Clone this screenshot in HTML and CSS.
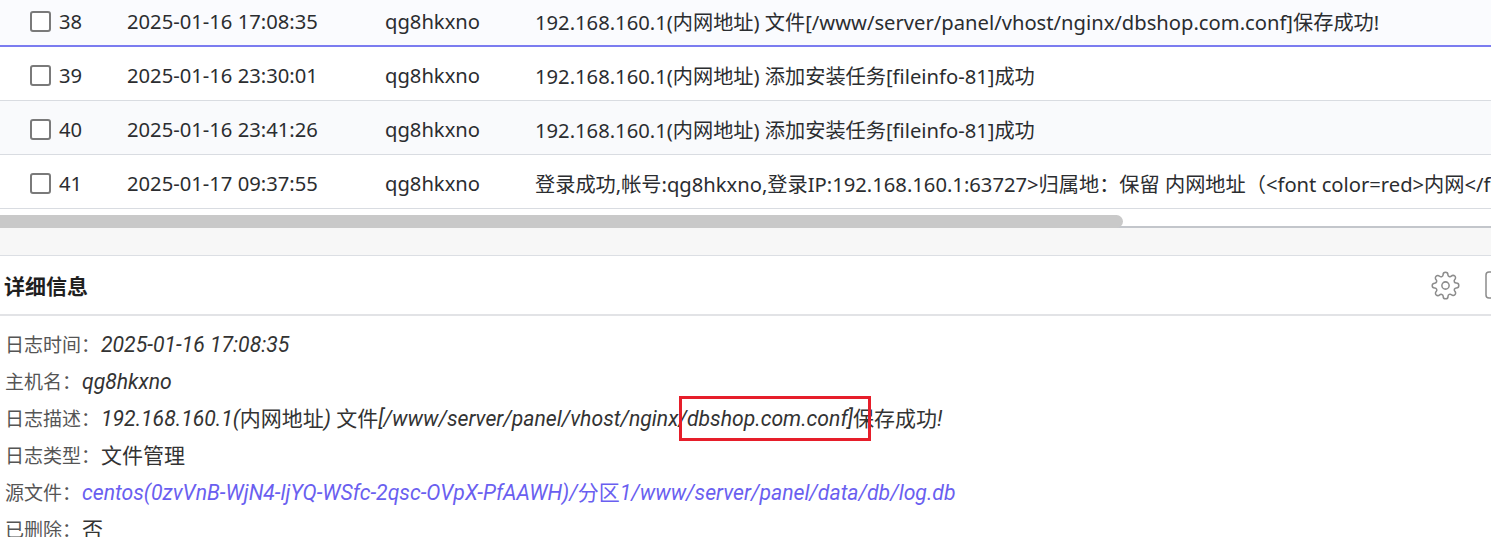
FILE: index.html
```html
<!DOCTYPE html>
<html lang="zh-CN">
<head>
<meta charset="utf-8">
<title>日志详情</title>
<link rel="stylesheet" href="styles.css">
</head>
<body>
<div class="grid">
  <div class="row row-first">
    <div class="c-idx"><span class="cb"></span><span>38</span></div>
    <div class="c-time">2025-01-16 17:08:35</div>
    <div class="c-host">qg8hkxno</div>
    <div class="c-desc">192.168.160.1(内网地址) 文件[/www/server/panel/vhost/nginx/dbshop.com.conf]保存成功!</div>
  </div>
  <div class="row">
    <div class="c-idx"><span class="cb"></span><span>39</span></div>
    <div class="c-time">2025-01-16 23:30:01</div>
    <div class="c-host">qg8hkxno</div>
    <div class="c-desc">192.168.160.1(内网地址) 添加安装任务[fileinfo-81]成功</div>
  </div>
  <div class="row row-alt">
    <div class="c-idx"><span class="cb"></span><span>40</span></div>
    <div class="c-time">2025-01-16 23:41:26</div>
    <div class="c-host">qg8hkxno</div>
    <div class="c-desc">192.168.160.1(内网地址) 添加安装任务[fileinfo-81]成功</div>
  </div>
  <div class="row">
    <div class="c-idx"><span class="cb"></span><span>41</span></div>
    <div class="c-time">2025-01-17 09:37:55</div>
    <div class="c-host">qg8hkxno</div>
    <div class="c-desc">登录成功,帐号:qg8hkxno,登录IP:192.168.160.1:63727&gt;归属地：保留 内网地址（&lt;font color=red&gt;内网&lt;/font&gt;）</div>
  </div>
</div>
<div class="hscroll"><div class="hscroll-thumb"></div></div>
<div class="band"></div>
<section class="detail">
  <div class="detail-head">
    <h2 class="detail-title">详细信息</h2>
    <div class="tools">
      <svg class="gear" width="29" height="29" viewBox="0 0 24 24" fill="none" stroke="#8c8c8c" stroke-width="1.25" stroke-linecap="round" stroke-linejoin="round">
        <circle cx="12" cy="12" r="3"/>
        <path d="M19.4 15a1.65 1.65 0 0 0 .33 1.82l.06.06a2 2 0 0 1 0 2.83 2 2 0 0 1-2.83 0l-.06-.06a1.65 1.65 0 0 0-1.82-.33 1.65 1.65 0 0 0-1 1.51V21a2 2 0 0 1-2 2 2 2 0 0 1-2-2v-.09A1.65 1.65 0 0 0 9 19.4a1.65 1.65 0 0 0-1.82.33l-.06.06a2 2 0 0 1-2.83 0 2 2 0 0 1 0-2.83l.06-.06a1.65 1.65 0 0 0 .33-1.82 1.65 1.65 0 0 0-1.51-1H3a2 2 0 0 1-2-2 2 2 0 0 1 2-2h.09A1.65 1.65 0 0 0 4.6 9a1.65 1.65 0 0 0-.33-1.82l-.06-.06a2 2 0 0 1 0-2.83 2 2 0 0 1 2.83 0l.06.06a1.65 1.65 0 0 0 1.82.33H9a1.65 1.65 0 0 0 1-1.51V3a2 2 0 0 1 2-2 2 2 0 0 1 2 2v.09a1.65 1.65 0 0 0 1 1.51 1.65 1.65 0 0 0 1.82-.33l.06-.06a2 2 0 0 1 2.83 0 2 2 0 0 1 0 2.83l-.06.06a1.65 1.65 0 0 0-.33 1.82V9a1.65 1.65 0 0 0 1.51 1H21a2 2 0 0 1 2 2 2 2 0 0 1-2 2h-.09a1.65 1.65 0 0 0-1.51 1z"/>
      </svg>
      <svg class="boxicon" width="24" height="28" viewBox="0 0 24 28" fill="none" stroke="#8c8c8c" stroke-width="1.5">
        <rect x="1" y="1" width="21" height="26" rx="3"/>
      </svg>
    </div>
  </div>
  <div class="detail-list">
    <div class="kv"><span class="k">日志时间：</span><span class="v">2025-01-16 17:08:35</span></div>
    <div class="kv"><span class="k">主机名：</span><span class="v">qg8hkxno</span></div>
    <div class="kv"><span class="k">日志描述：</span><span class="v">192.168.160.1(<span class="up">内网地址</span>) <span class="up">文件</span>[/www/server/panel/vhost/nginx/dbshop.com.conf]<span class="up">保存成功</span>!</span></div>
    <div class="kv"><span class="k">日志类型：</span><span class="v up">文件管理</span></div>
    <div class="kv"><span class="k">源文件：</span><span class="v link">centos(0zvVnB-WjN4-ljYQ-WSfc-2qsc-OVpX-PfAAWH)/<span class="up">分区</span>1/www/server/panel/data/db/log.db</span></div>
    <div class="kv"><span class="k">已删除：</span><span class="v up">否</span></div>
  </div>
</section>
<div class="annot"></div>
</body>
</html>
```
FILE: styles.css
```css
html, body {
  margin: 0;
  padding: 0;
  background: #ffffff;
}
body {
  width: 1491px;
  height: 537px;
  overflow: hidden;
  position: relative;
  font-family: "Noto Sans", "Noto Sans CJK SC", sans-serif;
  color: #2b2d30;
}
.grid {
  overflow: hidden;
}
.row {
  display: flex;
  align-items: center;
  box-sizing: border-box;
  height: 54px;
  padding-top: 3px;
  border-bottom: 1px solid #d9dce1;
  white-space: nowrap;
  font-size: 20.2px;
  background: #ffffff;
}
.row-first {
  height: 47px;
  padding-top: 0;
  padding-bottom: 3px;
  border-bottom: 2px solid #7b7cf0;
  background: #fafbfe;
}
.row-alt {
  background: #f9fafc;
}
.c-idx {
  width: 127px;
  flex: none;
  box-sizing: border-box;
  padding-left: 30px;
  display: flex;
  align-items: center;
  gap: 8px;
}
.cb {
  width: 21px;
  height: 21px;
  box-sizing: border-box;
  border: 2px solid #7a7a7a;
  border-radius: 3px;
  background: #fff;
  flex: none;
}
.c-time { width: 258px; flex: none; }
.c-host { width: 150px; flex: none; }
.c-desc { flex: none; }

.hscroll {
  height: 19px;
  box-sizing: border-box;
  padding-top: 6px;
  border-bottom: 2px solid #c3c6cb;
}
.hscroll-thumb {
  width: 1123px;
  height: 13px;
  background: #c9c9c9;
  border-radius: 0 7px 7px 0;
}
.band {
  height: 27px;
  background: #f7f7f7;
  border-bottom: 1px solid #dcdfe4;
}
.detail-head {
  height: 58px;
  display: flex;
  align-items: center;
  padding-left: 4px;
  border-bottom: 2px solid #e2e3e6;
}
.detail-title {
  margin: 0;
  font-family: "Noto Sans CJK SC", sans-serif;
  font-size: 21px;
  font-weight: 700;
  color: #1f1f1f;
}
.tools {
  margin-left: auto;
  margin-right: -18px;
  display: flex;
  align-items: center;
  gap: 25px;
}
.gear, .boxicon { display: block; }
.detail-list {
  padding: 9px 0 0 5px;
}
.kv {
  height: 37px;
  line-height: 37px;
  white-space: nowrap;
}
.k {
  font-family: "Noto Sans CJK SC", sans-serif;
  font-size: 19px;
  color: #555;
}
.v {
  font-family: Roboto, "Noto Sans CJK SC", sans-serif;
  font-style: italic;
  font-size: 21.2px;
  color: #333;
  margin-left: 1px;
}
.up {
  font-style: normal;
  font-family: "Noto Sans CJK SC", sans-serif;
  font-size: 21px;
}
.link {
  color: #6a5ff0;
}
.annot {
  position: absolute;
  left: 679px;
  top: 396px;
  width: 192px;
  height: 45px;
  box-sizing: border-box;
  border: 3px solid #e61e2a;
}
```
